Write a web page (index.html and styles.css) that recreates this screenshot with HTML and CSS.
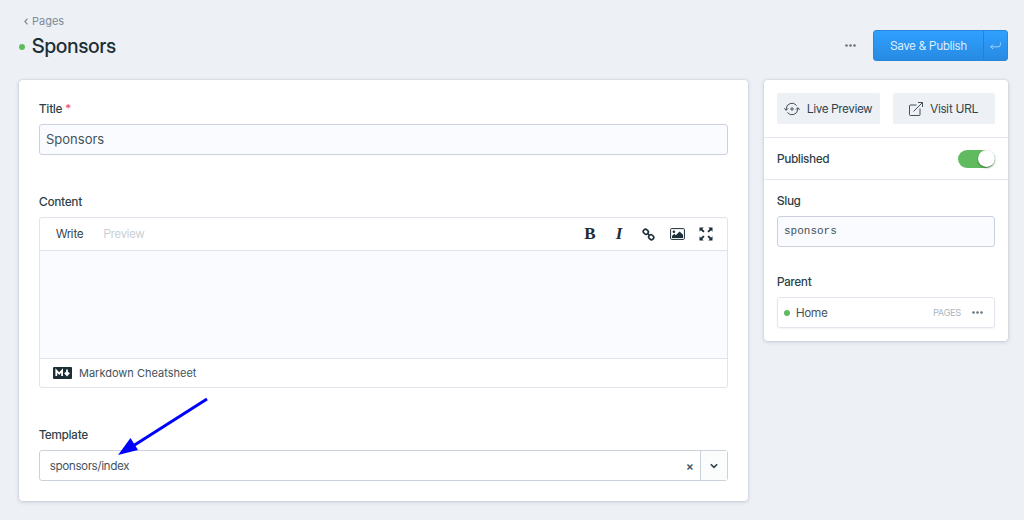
FILE: index.html
```html
<!DOCTYPE html>
<html lang="en">
<head>
    <meta charset="UTF-8">
    <meta name="viewport" content="width=device-width, initial-scale=1.0">
    <title>Sponsors</title>
    <link rel="stylesheet" href="styles.css">
</head>
<body>
    <header class="page-header">
        <div>
            <a class="breadcrumb" href="#">
                <svg width="4" height="7" viewBox="0 0 4 7"><path d="M3.5 .7L.9 3.5l2.6 2.8" fill="none" stroke="currentColor" stroke-width="1.2"/></svg>
                Pages
            </a>
            <h1><span class="dot"></span>Sponsors</h1>
        </div>
        <div class="actions">
            <button class="dots" type="button" aria-label="More actions">
                <svg width="11" height="3" viewBox="0 0 11 3" fill="currentColor"><circle cx="1.5" cy="1.5" r="1.3"/><circle cx="5.5" cy="1.5" r="1.3"/><circle cx="9.5" cy="1.5" r="1.3"/></svg>
            </button>
            <div class="save-group">
                <button class="save" type="submit" form="entry-form">Save &amp; Publish</button>
                <button class="save-more" type="button" aria-label="Save options">
                    <svg width="11" height="8" viewBox="0 0 11 8" fill="none" stroke="currentColor" stroke-linecap="round" stroke-linejoin="round"><path d="M10.4 .8v1.7Q10.4 4.8 8.2 4.8H.8M2.8 2.8L.8 4.8l2 2"/></svg>
                </button>
            </div>
        </div>
    </header>

    <form class="layout" id="entry-form">
        <!-- Main fields -->
        <main class="card main-card">
            <div class="field">
                <label for="title">Title <span class="required">*</span></label>
                <input class="text-input" type="text" id="title" value="Sponsors">
            </div>

            <div class="field">
                <label for="content">Content</label>
                <div class="editor">
                    <div class="toolbar">
                        <button class="tab active" type="button">Write</button>
                        <button class="tab" type="button">Preview</button>
                        <div class="tools">
                            <button class="tool bold" type="button">B</button>
                            <button class="tool italic" type="button">I</button>
                            <button class="tool" type="button" aria-label="Link">
                                <svg width="13" height="13" viewBox="0 0 13 13" fill="none" stroke="currentColor" stroke-width="1.6"><rect x="-2.6" y="-2.2" width="5.2" height="4.4" rx="2" transform="translate(3.8 3.8) rotate(45)"/><rect x="-2.6" y="-2.2" width="5.2" height="4.4" rx="2" transform="translate(9.2 9.2) rotate(45)"/><path d="M5 5l3 3"/></svg>
                            </button>
                            <button class="tool" type="button" aria-label="Image">
                                <svg width="15" height="12" viewBox="0 0 15 12"><rect x=".6" y=".6" width="13.8" height="10.8" rx="1" fill="none" stroke="currentColor"/><circle cx="3.9" cy="3.8" r="1.3" fill="currentColor"/><path d="M2 10V8l2.3-2.2L5.8 7.3l3.8-3.9L13 6.8V10z" fill="currentColor"/></svg>
                            </button>
                            <button class="tool" type="button" aria-label="Full screen">
                                <svg width="14" height="14" viewBox="0 0 14 14"><path d="M.5.5h4.2L3.3 1.9 5.6 4.2 4.2 5.6 1.9 3.3.5 4.7zM13.5.5v4.2L12.1 3.3 9.8 5.6 8.4 4.2l2.3-2.3L9.3.5zM.5 13.5V9.3l1.4 1.4 2.3-2.3 1.4 1.4-2.3 2.3 1.4 1.4zM13.5 13.5H9.3l1.4-1.4-2.3-2.3 1.4-1.4 2.3 2.3 1.4-1.4z" fill="currentColor"/></svg>
                            </button>
                        </div>
                    </div>
                    <textarea id="content"></textarea>
                    <a class="cheatsheet" href="#">
                        <svg width="19" height="12" viewBox="0 0 19 12"><rect width="19" height="12" rx="1" fill="#1c2e36"/><path d="M3.3 9V3.5l2.9 3.2 2.9-3.2V9M14 2.5v5M11.8 5.6L14 8.2l2.2-2.6" fill="none" stroke="#fff" stroke-width="1.8"/></svg>
                        Markdown Cheatsheet
                    </a>
                </div>
            </div>

            <div class="field template-field">
                <label for="template">Template</label>
                <div class="select-box">
                    <select id="template">
                        <option>sponsors/index</option>
                    </select>
                    <button class="clear" type="button" aria-label="Clear">×</button>
                    <button class="toggle-list" type="button" aria-label="Open list">
                        <svg width="8" height="6" viewBox="0 0 8 6"><path d="M.8 1.2L4 4.3l3.2-3.1" fill="none" stroke="currentColor" stroke-width="1.6"/></svg>
                    </button>
                </div>
                <svg class="pointer" width="90" height="60" viewBox="0 0 90 60"><path d="M89 2L15 49" stroke="#00f" stroke-width="3"/><path d="M0 58L12.5 41 20 53z" fill="#00f"/></svg>
            </div>
        </main>

        <!-- Sidebar -->
        <aside class="card sidebar">
            <div class="links">
                <button class="link-button" type="button">
                    <svg width="16" height="14" viewBox="0 0 16 14" fill="none" stroke="currentColor" stroke-width=".9"><circle cx="8" cy="7" r="1.2"/><path d="M2.2 8.2V7A5.8 5.8 0 0 1 12.6 3.5M13.8 5.8V7A5.8 5.8 0 0 1 3.4 10.5M.3 6.3l1.9 2 2-2M11.800 7.700l2-2 1.900 2"/></svg>
                    Live Preview
                </button>
                <a class="link-button" href="#">
                    <svg width="14" height="14" viewBox="0 0 14 14" fill="none" stroke="currentColor" stroke-width=".9"><path d="M7.5 3H1.5Q.5 3 .5 4v8.5q0 1 1 1H10q1 0 1-1V6.5M4.5 9.5l9-9M9 .5h4.5V5"/></svg>
                    Visit URL
                </a>
            </div>
            <div class="published">
                <label for="published">Published</label>
                <input class="switch" type="checkbox" id="published" checked>
            </div>
            <div class="side-fields">
                <div class="field">
                    <label for="slug">Slug</label>
                    <input class="text-input slug" type="text" id="slug" value="sponsors">
                </div>
                <div class="field">
                    <span class="label">Parent</span>
                    <div class="parent-entry">
                        <span class="dot"></span>
                        <a href="#">Home</a>
                        <small>PAGES</small>
                        <button class="dots" type="button" aria-label="Entry actions">
                            <svg width="11" height="3" viewBox="0 0 11 3" fill="currentColor"><circle cx="1.5" cy="1.5" r="1.3"/><circle cx="5.5" cy="1.5" r="1.3"/><circle cx="9.5" cy="1.5" r="1.3"/></svg>
                        </button>
                    </div>
                </div>
            </div>
        </aside>
    </form>
</body>
</html>
```
FILE: styles.css
```css
* {
    box-sizing: border-box;
}

body {
    margin: 0;
    padding: 13px 16px 19px 19px;
    background: #edf0f5;
    color: #43525b;
    font-family: "Inter Display", Inter, sans-serif;
    font-size: 12px;
    line-height: 16px;
}

button, input, select, textarea {
    font: inherit;
    color: inherit;
}

button {
    padding: 0;
    border: 0;
    background: none;
    cursor: pointer;
}

a {
    color: inherit;
    text-decoration: none;
}

svg {
    display: block;
    flex: none;
}

.page-header {
    display: flex;
    justify-content: space-between;
    height: 67px;
}

.breadcrumb {
    display: flex;
    align-items: center;
    gap: 4px;
    padding-left: 5px;
    color: #7b8b97;
    font-family: Inter, sans-serif;
    font-size: 11px;
}

h1 {
    display: flex;
    align-items: center;
    gap: 7px;
    margin: 5px 0 0;
    color: #1c2e36;
    font-size: 20px;
    font-weight: 500;
    line-height: 25px;
}

.dot {
    width: 6px;
    height: 6px;
    border-radius: 50%;
    background: #60bb60;
}

.actions {
    display: flex;
    align-items: center;
    gap: 17px;
    height: 31px;
    margin-top: 17px;
}

.dots {
    color: #66747e;
}

.save-group {
    display: flex;
    height: 31px;
    border: 1px solid #2a86d8;
    border-radius: 3px;
    background: linear-gradient(#30a0ff, #278ae2);
    color: #dceeff;
}

.save {
    padding: 0 16px;
}

.save-more {
    display: flex;
    align-items: center;
    justify-content: center;
    width: 24px;
    border-left: 1px solid #2482d4;
    color: #9fd2ff;
}

.layout {
    display: flex;
    align-items: flex-start;
    gap: 16px;
}

.card {
    border-radius: 4px;
    background: #fff;
    box-shadow: 0 0 1px 1px rgba(40, 50, 90, 0.05), 0 1px 4px rgba(40, 50, 90, 0.18);
}

.main-card {
    display: flex;
    flex: 1;
    flex-direction: column;
    gap: 39px;
    min-width: 0;
    padding: 21px 20px 20px;
}

.field {
    display: flex;
    flex-direction: column;
    gap: 7px;
}

label, .label {
    color: #2e3f48;
    font-weight: 500;
}

.required {
    color: #f05252;
}

.text-input {
    width: 100%;
    height: 31px;
    padding: 0 7px 1px 6px;
    border: 1px solid #ccd2dd;
    border-radius: 3px;
    background: #fafbfe;
    font-family: Inter, sans-serif;
    font-size: 13px;
}

/* Markdown editor */
.editor {
    border: 1px solid #dfe4ea;
    border-radius: 3px;
}

.toolbar {
    display: flex;
    align-items: center;
    gap: 20px;
    height: 33px;
    padding: 0 11px 0 16px;
    border-bottom: 1px solid #dfe4ea;
}

.tab {
    color: #c8cfd8;
}

.tab.active {
    color: #2e3f48;
}

.tools {
    display: flex;
    gap: 9px;
    margin-left: auto;
    color: #1c2e36;
}

.tool {
    display: flex;
    align-items: center;
    justify-content: center;
    width: 20px;
    height: 20px;
}

.bold, .italic {
    font-family: "Liberation Serif", serif;
    font-size: 17px;
    font-weight: bold;
}

.italic {
    font-style: italic;
}

.editor textarea {
    display: block;
    width: 100%;
    height: 107px;
    padding: 10px 16px;
    border: 0;
    background: #fafbfe;
    resize: none;
}

.cheatsheet {
    display: flex;
    align-items: center;
    gap: 7px;
    height: 29px;
    padding-left: 13px;
    border-top: 1px solid #dfe4ea;
    font-family: Inter, sans-serif;
    font-size: 11px;
}

/* Template drop-down */
.template-field {
    position: relative;
}

.select-box {
    display: flex;
    height: 31px;
    border: 1px solid #ccd2dd;
    border-radius: 3px;
}

.select-box select {
    flex: 1;
    padding: 0 10px;
    border: 0;
    background: none;
    appearance: none;
}

.clear {
    width: 20px;
    font-weight: 600;
}

.toggle-list {
    display: flex;
    align-items: center;
    justify-content: center;
    width: 27px;
    border-left: 1px solid #ccd2dd;
    background: #fbfcfc;
    color: #2e3f48;
}

.pointer {
    position: absolute;
    top: -30px;
    left: 79px;
    pointer-events: none;
}

/* Sidebar */
.sidebar {
    flex: 0 0 244px;
}

.links {
    display: grid;
    grid-template-columns: 1fr 1fr;
    gap: 13px;
    padding: 13px;
    border-bottom: 1px solid #e2e7ed;
}

.link-button {
    display: flex;
    align-items: center;
    justify-content: center;
    gap: 7px;
    height: 31px;
    border-radius: 2px;
    background: #edf0f5;
    color: #2e3f48;
    white-space: nowrap;
}

.published {
    display: flex;
    align-items: center;
    justify-content: space-between;
    height: 42px;
    padding: 0 13px;
    border-bottom: 1px solid #e2e7ed;
}

.switch {
    display: flex;
    align-items: center;
    width: 37px;
    height: 18px;
    margin: 0;
    border-radius: 9px;
    background: #c8cfd8;
    appearance: none;
    cursor: pointer;
}

.switch::before {
    content: "";
    width: 17px;
    height: 17px;
    border-radius: 50%;
    background: #fff;
    box-shadow: 0 1px 2px rgba(0, 0, 0, 0.4);
}

.switch:checked {
    justify-content: flex-end;
    background: #60bb60;
}

.side-fields {
    display: flex;
    flex-direction: column;
    gap: 27px;
    padding: 13px;
}

.slug {
    font-family: "Liberation Mono", monospace;
    font-size: 11px;
}

.parent-entry {
    display: flex;
    align-items: center;
    gap: 6px;
    height: 31px;
    padding: 0 11px 0 6px;
    border: 1px solid #e2e7ed;
    border-radius: 3px;
    box-shadow: 0 1px 2px rgba(40, 50, 90, 0.06);
}

.parent-entry small {
    margin-left: auto;
    margin-right: 5px;
    color: #aab4c0;
    font-size: 9px;
}
```
